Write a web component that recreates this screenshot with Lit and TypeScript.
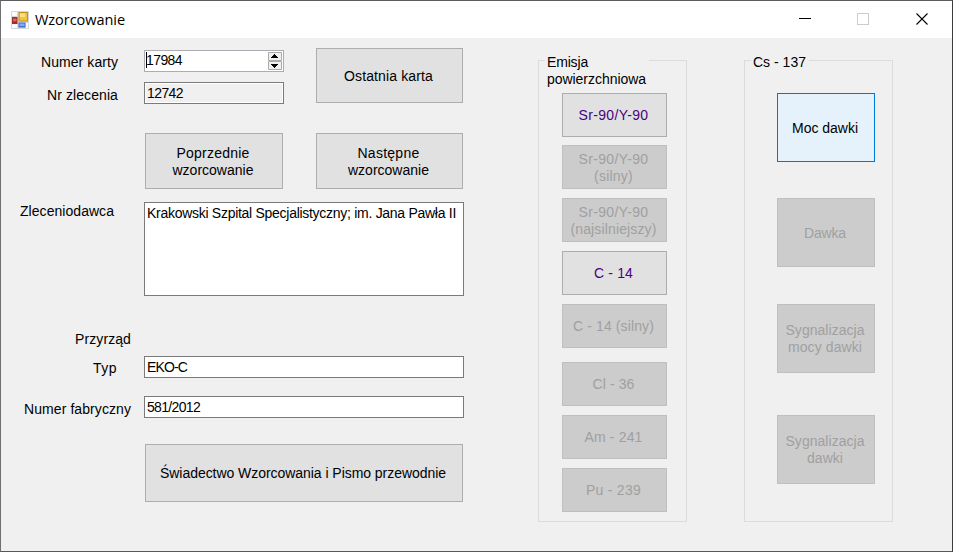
import { LitElement, html, css, svg } from "lit";
import { customElement } from "lit/decorators.js";
import { classMap } from "lit/directives/class-map.js";
import { styleMap } from "lit/directives/style-map.js";

type Line = [text: string, width: number];
interface Action {
  lines: Line[];
  kind?: "visited" | "disabled" | "focused";
}

const context = document.createElement("canvas").getContext("2d")!;

const UI_FONT = '14px "Liberation Sans"';
const TITLE_FONT = '14.5px "Open Sans"';

/* Tracks a run of text so that its advance equals the given width. */
function tracked([text, width]: Line, font = UI_FONT) {
  context.font = font;
  const spacing = (width - context.measureText(text).width) / text.length;
  return html`<span class="run" style=${styleMap({ letterSpacing: `${spacing.toFixed(3)}px` })}>${text}</span>`;
}

const SURFACE: Action[] = [
  { lines: [["Sr-90/Y-90", 70]], kind: "visited" },
  { lines: [["Sr-90/Y-90", 70], ["(silny)", 39]], kind: "disabled" },
  { lines: [["Sr-90/Y-90", 70], ["(najsilniejszy)", 86]], kind: "disabled" },
  { lines: [["C - 14", 39]], kind: "visited" },
  { lines: [["C - 14 (silny)", 81]], kind: "disabled" },
  { lines: [["Cl - 36", 42]], kind: "disabled" },
  { lines: [["Am - 241", 58]], kind: "disabled" },
  { lines: [["Pu - 239", 55]], kind: "disabled" },
];

const CAESIUM: Action[] = [
  { lines: [["Moc dawki", 66]], kind: "focused" },
  { lines: [["Dawka", 42]], kind: "disabled" },
  { lines: [["Sygnalizacja", 79], ["mocy dawki", 74]], kind: "disabled" },
  { lines: [["Sygnalizacja", 79], ["dawki", 36]], kind: "disabled" },
];

@customElement("app-root")
export class AppRoot extends LitElement {
  static styles = css`
    :host {
      display: flex;
      flex-direction: column;
      box-sizing: border-box;
      width: 953px;
      height: 552px;
      overflow: hidden;
      border: 1px solid;
      border-color: #5c5b60 #3b3b3e #57575a #6f6f73;
      background: #f0f0f0;
      color: #000;
      font: 14px/17px "Liberation Sans", Arial, sans-serif;
    }
    * { box-sizing: border-box; }
    .run { display: block; white-space: pre; }
    .titlebar {
      display: flex;
      align-items: center;
      flex: none;
      height: 37px;
      padding-left: 10px;
      background: #fff;
    }
    .title {
      flex: 1;
      margin: 1px 0 0 6px;
      font: 14.5px/20px "Open Sans", sans-serif;
    }
    .caption { width: 58px; height: 37px; flex: none; }
    .caption.close { margin-right: 1px; }
    .body { display: flex; flex: 1; }
    .form { width: 537px; padding-top: 10px; }
    .row { display: flex; align-items: flex-start; }
    .label { width: 143px; flex: none; }
    .top { height: 85px; }
    .stack { width: 315px; padding-top: 2px; }
    .stack .row { height: 32px; }
    .i19 { padding-left: 19px; padding-top: 1px; }
    .i23 { padding-left: 23px; padding-top: 5px; }
    .i40 { padding-left: 40px; padding-top: 4px; }
    .i46 { padding-left: 46px; padding-top: 5px; }
    .i74 { padding-left: 74px; }
    .i92 { padding-left: 92px; padding-top: 4px; }
    .input {
      display: flex;
      width: 320px;
      height: 22px;
      padding: 2px 0 0 2px;
      border: 1px solid #7a7a7a;
      background: #fff;
      line-height: 16px;
    }
    .input.short { width: 140px; }
    .input.readonly { background: #f0f0f0; box-shadow: inset 0 0 0 1px #fff; }
    .input.spin { border-color: #abadb3; padding: 1px; }
    .input.area { height: 94px; }
    .caret { width: 1px; height: 16px; background: #000; }
    .value { flex: 1; margin-left: -1px; }
    .spinner { flex: none; width: 14px; height: 18px; }
    .btn {
      display: flex;
      flex-direction: column;
      align-items: center;
      justify-content: center;
      flex: none;
      margin: 0;
      padding: 0 2px 0 0;
      border: 1px solid #adadad;
      border-radius: 0;
      background: #e1e1e1;
      color: #000;
      font: inherit;
    }
    .visited { color: #4b0082; }
    .disabled { background: #ccc; border-color: #bfbfbf; color: #a0a0a0; }
    .focused { background: #e5f1fb; border-color: #0078d7; }
    .last { width: 147px; height: 55px; padding-top: 2px; }
    .nav { gap: 33px; padding-left: 144px; height: 69px; }
    .prev { width: 138px; height: 56px; padding-top: 2px; }
    .next { width: 147px; height: 56px; padding-top: 2px; }
    .client { height: 129px; }
    .device { height: 25px; }
    .type { height: 40px; }
    .serial { height: 48px; }
    .print { padding-left: 144px; }
    .certificate { width: 318px; height: 58px; }
    .group {
      display: flex;
      flex-direction: column;
      align-items: flex-start;
      width: 149px;
      height: 462px;
      margin: 22px 0 0;
      padding: 0;
      border: 1px solid #dcdcdc;
    }
    .group + .group { margin-left: 57px; }
    .legend {
      flex: none;
      height: 34px;
      margin: -7px 0 0 6px;
      padding: 0 3px 0 2px;
      background: #f0f0f0;
    }
    .surface .legend { width: 104px; }
    .one { height: 17px; margin-bottom: 17px; }
    .list { display: grid; margin-top: 5px; }
    .surface .list { grid-template-rows: 52px 53px 53px 53px 58px 53px 53px 44px; margin-left: 23px; }
    .surface .btn { width: 105px; height: 44px; }
    .surface .btn.double { padding-top: 2px; }
    .caesium .list { grid-template-rows: 105px 106px 111px 69px; margin-left: 32px; }
    .caesium .btn { width: 98px; height: 69px; padding-top: 1px; }
  `;

  private button(size: string, action: Action) {
    const kind = action.kind ?? "";
    return html`<button class=${classMap({
      btn: true,
      [size]: true,
      double: action.lines.length > 1,
      ...(kind ? { [kind]: true } : {}),
    })}
      ?disabled=${kind === "disabled"}>${action.lines.map((l) => tracked(l))}</button>`;
  }

  private group(name: string, legend: Line[], actions: Action[]) {
    return html`<section class="group ${name}">
      <div class="legend ${legend.length === 1 ? "one" : ""}">${legend.map((l) => tracked(l))}</div>
      <div class="list">${actions.map((a) => this.button("source", a))}</div>
    </section>`;
  }

  private appIcon() {
    return svg`<svg width="18" height="18" viewBox="0 0 18 18">
      <rect width="18" height="18" fill="#d5d7da"/>
      <path d="M1 1h5v4H1zM1 13h5v4H1zM15 12h2v5h-2z" fill="#fbfbfc"/>
      <rect x="1" y="6" width="5.5" height="7" fill="#a3292b"/>
      <rect x="2" y="7.5" width="3.5" height="3" fill="#d9605c"/>
      <rect x="7.5" y="1" width="9.5" height="9.5" fill="#c98f1c"/>
      <rect x="8.5" y="2" width="7.5" height="7.5" fill="#f5c338"/>
      <rect x="9" y="2.5" width="5" height="3.5" fill="#fde08a"/>
      <rect x="7.5" y="11.5" width="7" height="5" fill="#3f73cf"/>
      <rect x="8.5" y="12.5" width="5" height="2.5" fill="#7facf3"/>
    </svg>`;
  }

  render() {
    return html`
      <header class="titlebar">
        ${this.appIcon()}
        <div class="title">${tracked(["Wzorcowanie", 90], TITLE_FONT)}</div>
        <svg class="caption" viewBox="0 0 58 37"><path d="M22 17.5h12" stroke="#000"/></svg>
        <svg class="caption" viewBox="0 0 58 37"><rect x="22.5" y="12.5" width="11" height="11" fill="none" stroke="#ccc"/></svg>
        <svg class="caption close" viewBox="0 0 58 37"><path d="M23.5 12.5l11 11M34.5 12.5l-11 11" stroke="#000" stroke-width="1.1"/></svg>
      </header>
      <main class="body">
        <div class="form">
          <div class="row top">
            <div class="stack">
              <div class="row">
                <div class="label i40">${tracked(["Numer karty", 77])}</div>
                <div class="input short spin">
                  <i class="caret"></i>
                  <div class="value">${tracked(["17984", 36])}</div>
                  <svg class="spinner" viewBox="0 0 14 18">
                    <path d="M.5.5h13v8H.5zM.5 9.5h13v8H.5z" fill="#f0f0f0" stroke="#acacac"/>
                    <path d="M6 2h1v1h1v1h1v1h1v1H3V5h1V4h1V3h1zM3 12h7v1H9v1H8v1H7v1H6v-1H5v-1H4v-1H3z"/>
                  </svg>
                </div>
              </div>
              <div class="row">
                <div class="label i46">${tracked(["Nr zlecenia", 71])}</div>
                <div class="input short readonly">${tracked(["12742", 36])}</div>
              </div>
            </div>
            ${this.button("last", { lines: [["Ostatnia karta", 89]] })}
          </div>
          <div class="row nav">
            ${this.button("prev", { lines: [["Poprzednie", 73], ["wzorcowanie", 81]] })}
            ${this.button("next", { lines: [["Następne", 62], ["wzorcowanie", 81]] })}
          </div>
          <div class="row client">
            <div class="label i19">${tracked(["Zleceniodawca", 94])}</div>
            <div class="input area">${tracked(["Krakowski Szpital Specjalistyczny; im. Jana Pawła II", 309])}</div>
          </div>
          <div class="row device"><div class="label i74">${tracked(["Przyrząd", 56])}</div></div>
          <div class="row type">
            <div class="label i92">${tracked(["Typ", 24])}</div>
            <div class="input">${tracked(["EKO-C", 40])}</div>
          </div>
          <div class="row serial">
            <div class="label i23">${tracked(["Numer fabryczny", 107])}</div>
            <div class="input">${tracked(["581/2012", 53])}</div>
          </div>
          <div class="row print">
            ${this.button("certificate", { lines: [["Świadectwo Wzorcowania i Pismo przewodnie", 286]] })}
          </div>
        </div>
        ${this.group("surface", [["Emisja", 41], ["powierzchniowa", 99]], SURFACE)}
        ${this.group("caesium", [["Cs - 137", 53]], CAESIUM)}
      </main>`;
  }
}
